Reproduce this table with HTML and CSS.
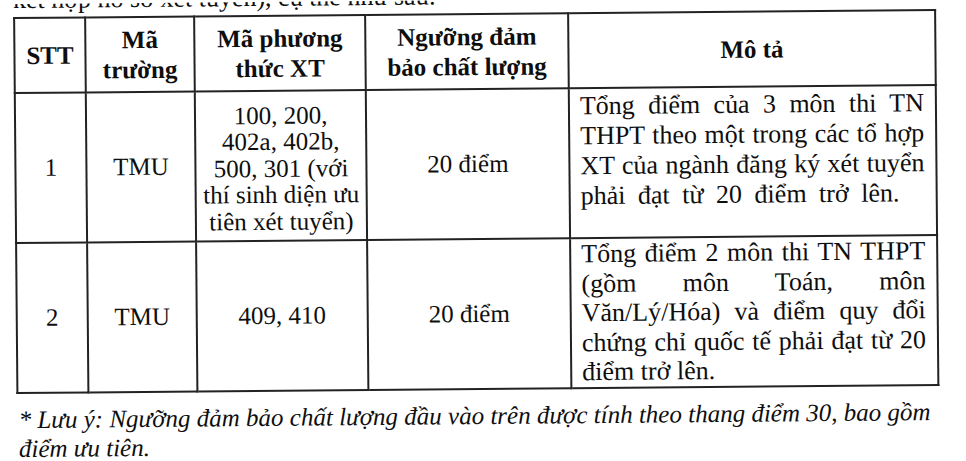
FILE: index.html
```html
<!DOCTYPE html>
<html lang="vi">
<head>
<meta charset="utf-8">
<title>Ngưỡng đảm bảo chất lượng</title>
<link rel="stylesheet" href="styles.css">
</head>
<body>
<div class="page">
  <div class="lead"><p class="lead-text">kết hợp hồ sơ xét tuyển), cụ thể như sau:</p></div>
  <table class="grid">
    <colgroup>
      <col class="c1"><col class="c2"><col class="c3"><col class="c4"><col class="c5">
    </colgroup>
    <thead>
      <tr class="head">
        <th>STT</th>
        <th>Mã<br>trường</th>
        <th>Mã phương<br>thức XT</th>
        <th>Ngưỡng đảm<br>bảo chất lượng</th>
        <th>Mô tả</th>
      </tr>
    </thead>
    <tbody>
      <tr class="row">
        <td>1</td>
        <td>TMU</td>
        <td class="codes">100, 200,<br>402a, 402b,<br>500, 301 (với<br>thí sinh diện ưu<br>tiên xét tuyển)</td>
        <td>20 điểm</td>
        <td class="desc desc-top">
          <span class="ln">Tổng điểm của 3 môn thi TN</span>
          <span class="ln">THPT theo một trong các tổ hợp</span>
          <span class="ln">XT của ngành đăng ký xét tuyển</span>
          <span class="ln last wide">phải đạt từ 20 điểm trở lên.</span>
        </td>
      </tr>
      <tr class="row">
        <td>2</td>
        <td>TMU</td>
        <td>409, 410</td>
        <td>20 điểm</td>
        <td class="desc desc-fill">
          <span class="ln">Tổng điểm 2 môn thi TN THPT</span>
          <span class="ln">(gồm môn Toán, môn</span>
          <span class="ln">Văn/Lý/Hóa) và điểm quy đổi</span>
          <span class="ln">chứng chỉ quốc tế phải đạt từ 20</span>
          <span class="ln last">điểm trở lên.</span>
        </td>
      </tr>
    </tbody>
  </table>
  <p class="note">
    <span class="note-ln">* Lưu ý: Ngưỡng đảm bảo chất lượng đầu vào trên được tính theo thang điểm 30, bao gồm</span>
    <span class="note-ln">điểm ưu tiên.</span>
  </p>
</div>
</body>
</html>
```
FILE: styles.css
```css
html, body {
  margin: 0;
  padding: 0;
  background: #ffffff;
}

body {
  width: 966px;
  height: 461px;
  overflow: hidden;
  font-family: "Liberation Serif", "Times New Roman", serif;
  color: #0e0e0e;
}

.page {
  width: 966px;
  height: 461px;
  transform: rotate(-0.5deg);
  transform-origin: 483px 230px;
}

.lead {
  height: 13px;
  overflow: hidden;
}

.lead-text {
  margin: -17px 0 0 15px;
  font-size: 26px;
  line-height: 26px;
  white-space: nowrap;
}

.grid {
  margin: 0 0 0 15px;
  border-collapse: collapse;
  table-layout: fixed;
  width: 921px;
}

.c1 { width: 71px; }
.c2 { width: 109px; }
.c3 { width: 171px; }
.c4 { width: 203px; }
.c5 { width: 367px; }

.grid th,
.grid td {
  border: 2px solid #222222;
  padding: 0;
  text-align: center;
  vertical-align: middle;
}

.grid th {
  font-weight: bold;
  font-size: 25px;
  line-height: 30px;
}

.head {
  height: 75px;
}

.row {
  height: 150px;
}

.grid td {
  font-size: 25px;
  line-height: 30px;
}

.grid td.codes {
  font-size: 25px;
  line-height: 26.5px;
  padding-top: 6px;
}

.grid td.desc {
  font-size: 26px;
  line-height: 30px;
  text-align: justify;
  padding: 0 11px 0 10px;
}

.grid td.desc-top {
  vertical-align: top;
  padding-top: 2px;
}

.grid td.desc-fill {
  vertical-align: top;
  line-height: 29.6px;
  padding-top: 0;
}

.ln {
  display: block;
  text-align: justify;
  text-align-last: justify;
}

.ln.last {
  text-align-last: left;
}

.ln.wide {
  word-spacing: 6px;
}

.note {
  margin: 11px 0 0 17px;
  font-style: italic;
  font-size: 25px;
  line-height: 29px;
}

.note-ln {
  display: block;
  white-space: nowrap;
}
```
